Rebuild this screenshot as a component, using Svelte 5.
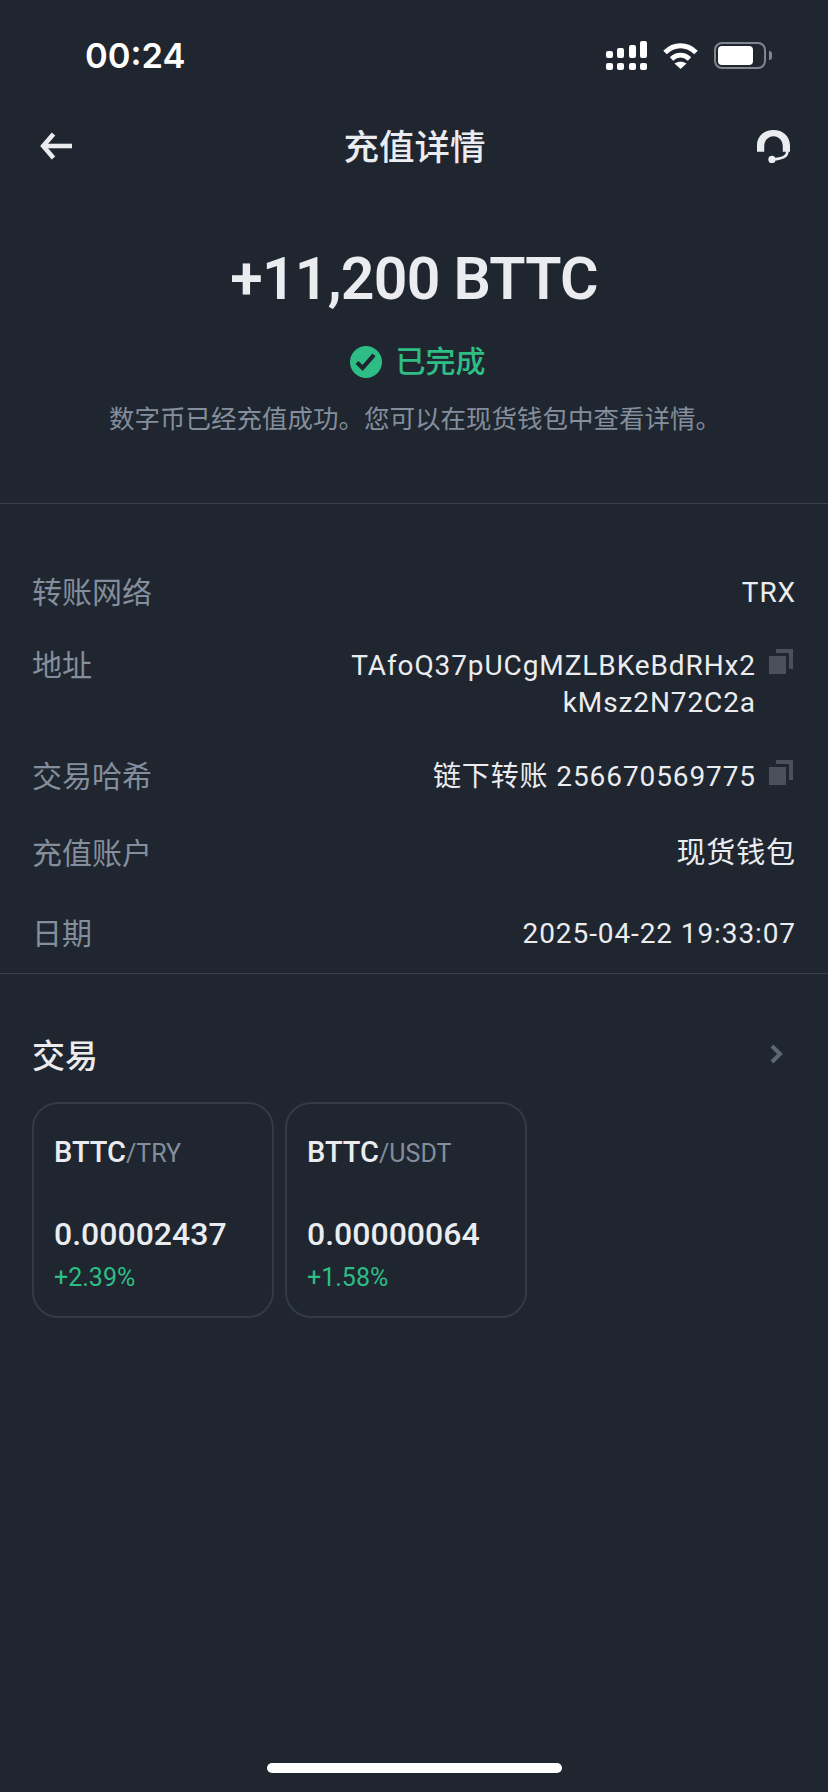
<script>
	const rows = [
		{ label: '转账网络', value: 'TRX' },
		{ label: '地址', value: 'TAfoQ37pUCgMZLBKeBdRHx2 kMsz2N72C2a', copy: true, wide: true },
		{ label: '交易哈希', value: '链下转账 256670569775', copy: true },
		{ label: '充值账户', value: '现货钱包' },
		{ label: '日期', value: '2025-04-22 19:33:07' }
	];
	const pairs = [
		{ base: 'BTTC', quote: '/TRY', price: '0.00002437', change: '+2.39%' },
		{ base: 'BTTC', quote: '/USDT', price: '0.00000064', change: '+1.58%' }
	];
	const bars = [
		{ x: 0, y: 10, h: 7 },
		{ x: 11, y: 7, h: 10 },
		{ x: 23, y: 4, h: 13 },
		{ x: 34, y: 0, h: 17 }
	];
</script>

<div class="page">
	<header class="status">
		<span class="time">00:24</span>
		<div class="status-icons">
			<svg width="41" height="29" viewBox="0 0 41 29" fill="#fff">
				{#each bars as bar}
					<rect x={bar.x} y={bar.y} width="7" height={bar.h} rx="2" />
					<rect x={bar.x} y="22" width="7" height="7" rx="2" />
				{/each}
			</svg>
			<svg width="35" height="27" viewBox="0 0 35 27" fill="none" stroke="#fff" stroke-width="5">
				<path d="M2 10.5 C11 1.5 24 1.5 33 10.5" />
				<path d="M8.5 17 C14 12 21 12 26.5 17" />
				<path d="M17.5 27 L11.5 21.5 C15 19 20 19 23.5 21.5 Z" fill="#fff" stroke="none" />
			</svg>
			<div class="battery"><div class="battery-fill"></div></div>
			<div class="battery-cap"></div>
		</div>
	</header>

	<nav class="topbar">
		<svg width="32" height="28" viewBox="0 0 32 28" fill="none" stroke="#eaecef" stroke-width="4.6">
			<path d="M13.5 2 L3.2 14 L13.5 26" />
			<path d="M4 14 H32" />
		</svg>
		<h1>充值详情</h1>
		<svg class="headset" width="33" height="33" viewBox="0 0 32 32" fill="#eaecef">
			<path d="M0 21 V15 C0 6 7 0 16 0 C25 0 32 6 32 15 V21 H25 V16 C25 10 21 6 16 6 C11 6 7 10 7 16 V21 Z" />
			<path d="M29.5 20 C29.5 26 25 27.5 17 28.5" fill="none" stroke="#eaecef" stroke-width="2.6" />
			<circle cx="14.5" cy="28.5" r="3.5" />
		</svg>
	</nav>

	<section class="hero">
		<div class="amount">+11,200 BTTC</div>
		<div class="state">
			<svg width="32" height="32" viewBox="0 0 32 32">
				<circle cx="16" cy="16" r="16" fill="#2ebd85" />
				<path d="M7 16.5 L12.6 22 L24 8.8" fill="none" stroke="#1f2630" stroke-width="4.2" />
			</svg>
			<span>已完成</span>
		</div>
		<p>数字币已经充值成功。您可以在现货钱包中查看详情。</p>
	</section>

	<section class="details">
		{#each rows as row}
			<div class="row">
				<span class="label">{row.label}</span>
				<div class="value" class:wide={row.wide}>
					<span>{row.value}</span>
					{#if row.copy}
						<svg class="copy" width="24" height="25" viewBox="0 0 24 25" fill="#4b515c">
							<rect x="0" y="7" width="17" height="18" />
							<path d="M7 0 H24 V20 H20 V4 H7 Z" />
						</svg>
					{/if}
				</div>
			</div>
		{/each}
	</section>

	<section class="trade">
		<div class="trade-head">
			<h2>交易</h2>
			<svg width="14" height="20" viewBox="0 0 14 20" fill="none" stroke="#5e6673" stroke-width="4">
				<path d="M3 2 L11 10 L3 18" />
			</svg>
		</div>
		<div class="cards">
			{#each pairs as pair}
				<div class="card">
					<div class="pair"><span class="base">{pair.base}</span><span class="quote">{pair.quote}</span></div>
					<div class="price">{pair.price}</div>
					<div class="change">{pair.change}</div>
				</div>
			{/each}
		</div>
	</section>

	<div class="home-bar"></div>
</div>

<style>
	:global(body) {
		margin: 0;
		background: #1f2630;
	}
	.page {
		position: relative;
		width: 828px;
		height: 1792px;
		overflow: hidden;
		background: #1f2630;
		color: #eaecef;
		font-family: Roboto, 'Noto Sans CJK SC', sans-serif;
	}
	.status {
		display: flex;
		justify-content: space-between;
		align-items: center;
		height: 28px;
		padding: 41px 56px 0 85px;
	}
	.time {
		font-family: Inter, sans-serif;
		font-size: 34.5px;
		font-weight: 600;
		color: #fff;
	}
	.status-icons {
		display: flex;
		align-items: center;
		gap: 16px;
	}
	.battery {
		width: 52px;
		height: 27px;
		padding: 2px;
		box-sizing: border-box;
		border: 2px solid #80858f;
		border-radius: 8px;
	}
	.battery-fill {
		width: 35px;
		height: 19px;
		background: #fff;
		border-radius: 4px;
	}
	.battery-cap {
		width: 3px;
		height: 9px;
		margin-left: -13px;
		background: #80858f;
		border-radius: 0 3px 3px 0;
	}
	.topbar {
		display: flex;
		justify-content: space-between;
		align-items: center;
		height: 60px;
		margin-top: 47px;
		padding: 0 38px 0 40px;
	}
	.headset {
		margin-top: 1px;
	}
	h1 {
		margin: 0 0 4px;
		font-size: 35.5px;
		font-weight: 500;
	}
	.hero {
		display: flex;
		flex-direction: column;
		align-items: center;
		height: 327px;
		border-bottom: 1px solid #3a404a;
	}
	.amount {
		margin-top: 69px;
		font-size: 59px;
		line-height: 68px;
		font-weight: 600;
		letter-spacing: -0.8px;
	}
	.state {
		display: flex;
		align-items: center;
		gap: 14px;
		margin-top: 31px;
		padding-left: 7px;
		color: #2ebd85;
		font-size: 30px;
		line-height: 36px;
		font-weight: 500;
	}
	.hero p {
		margin: 21px 0 0 2px;
		font-size: 25.5px;
		line-height: 36px;
		color: #848e9c;
	}
	.details {
		padding: 70px 32px 0;
		border-bottom: 1px solid #3a404a;
		height: 399px;
	}
	.row {
		display: flex;
		justify-content: space-between;
		align-items: flex-start;
		margin-bottom: 36px;
		font-size: 28px;
		line-height: 37px;
		letter-spacing: 0.9px;
	}
	.row:nth-child(2) {
		margin-bottom: 37px;
	}
	.row:nth-child(3) {
		margin-bottom: 40px;
	}
	.row:nth-child(4) {
		margin-bottom: 43px;
		font-size: 29px;
	}
	.label {
		color: #848e9c;
		font-size: 30px;
		letter-spacing: 0;
	}
	.value {
		display: flex;
		align-items: flex-start;
		gap: 13px;
		margin-right: 3px;
		text-align: right;
	}
	.row:nth-child(1) .value,
	.row:nth-child(4) .value,
	.row:nth-child(5) .value {
		margin-right: 0;
	}
	.value.wide span {
		width: 410px;
	}
	.copy {
		margin-top: 2px;
	}
	.trade {
		padding: 0 32px;
	}
	.trade-head {
		display: flex;
		justify-content: space-between;
		align-items: center;
		height: 46px;
		margin-top: 57px;
		padding-right: 13px;
	}
	h2 {
		margin: 0;
		font-size: 33px;
		font-weight: 500;
	}
	.cards {
		display: flex;
		gap: 11px;
		margin-top: 25px;
	}
	.card {
		box-sizing: border-box;
		width: 242px;
		height: 216px;
		padding: 30px 20px 0;
		border: 2px solid #343a45;
		border-radius: 26px;
	}
	.pair {
		line-height: 36px;
	}
	.base {
		font-size: 29px;
		font-weight: 500;
	}
	.quote {
		font-size: 25px;
		color: #848e9c;
	}
	.price {
		margin-top: 39px;
		font-size: 32px;
		line-height: 40px;
		font-weight: 500;
	}
	.change {
		margin-top: 9px;
		font-size: 25px;
		line-height: 30px;
		color: #2ebd85;
	}
	.home-bar {
		position: absolute;
		left: 267px;
		bottom: 19px;
		width: 295px;
		height: 10px;
		border-radius: 5px;
		background: #fff;
	}
</style>
